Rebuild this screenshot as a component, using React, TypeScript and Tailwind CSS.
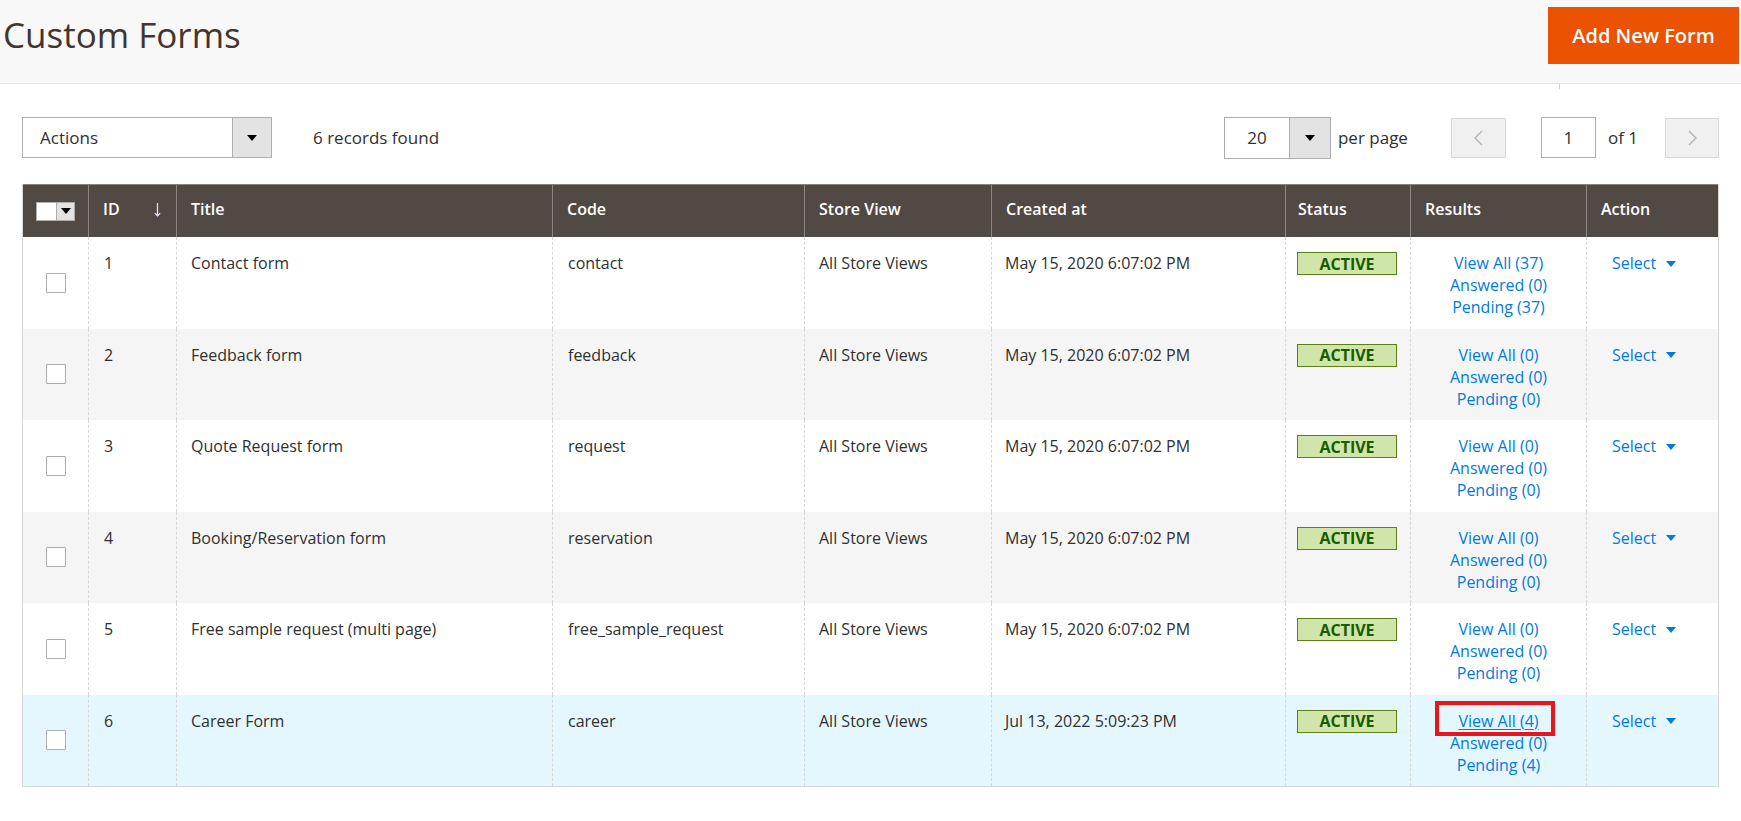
import React from "react";

type Row = {
  id: number;
  title: string;
  code: string;
  created: string;
  all: number;
  answered: number;
  pending: number;
};

const rows: Row[] = [
  { id: 1, title: "Contact form", code: "contact", created: "May 15, 2020 6:07:02 PM", all: 37, answered: 0, pending: 37 },
  { id: 2, title: "Feedback form", code: "feedback", created: "May 15, 2020 6:07:02 PM", all: 0, answered: 0, pending: 0 },
  { id: 3, title: "Quote Request form", code: "request", created: "May 15, 2020 6:07:02 PM", all: 0, answered: 0, pending: 0 },
  { id: 4, title: "Booking/Reservation form", code: "reservation", created: "May 15, 2020 6:07:02 PM", all: 0, answered: 0, pending: 0 },
  { id: 5, title: "Free sample request (multi page)", code: "free_sample_request", created: "May 15, 2020 6:07:02 PM", all: 0, answered: 0, pending: 0 },
  { id: 6, title: "Career Form", code: "career", created: "Jul 13, 2022 5:09:23 PM", all: 4, answered: 0, pending: 4 },
];

const rowBg = ["bg-white", "bg-[#f5f5f5]", "bg-white", "bg-[#f5f5f5]", "bg-white", "bg-[#e5f7fe]"];

const Caret = ({ className = "" }: { className?: string }) => (
  <svg width="10" height="6" viewBox="0 0 10 6" className={className}>
    <path d="M0 0 H10 L5 6 Z" fill="currentColor" />
  </svg>
);

const th = "h-[53px] px-[14px] pt-[13px] align-top text-left text-[16px] leading-[22px] font-semibold text-white border-l border-t border-[#8a837f]";
const td = "px-[14px] pt-[15px] align-top text-[16px] leading-[22px] border-l border-dashed border-[#d6d6d6]";

export default function App() {
  return (
    <div className="min-h-screen bg-white font-['Open_Sans',sans-serif] text-[#303030]">
      {/* page header */}
      <div className="relative flex h-[84px] items-start justify-between border-b border-[#e3e3e3] bg-[#f8f8f8] pl-[3px] pr-[2px]">
        <h1 className="mt-[11px] text-[35px] leading-[48px] font-normal text-[#41362f]">Custom Forms</h1>
        <button className="mt-[7px] h-[57px] w-[191px] bg-[#eb5202] text-[20px] font-semibold text-white">
          Add New Form
        </button>
        <span className="absolute left-[1559px] top-[84px] h-[5px] w-px bg-[#cfcfcf]" />
      </div>

      <div className="px-[22px]">
        {/* controls */}
        <div className="mt-[33px] flex h-[41px] items-center justify-between text-[17px]">
          <div className="flex items-center">
            <div className="flex h-[41px] w-[250px] shrink-0 border border-[#adadad]">
              <span className="flex flex-1 items-center pl-[17px]">Actions</span>
              <span className="flex w-[39px] items-center justify-center border-l border-[#adadad] bg-[#e3e3e3] text-black">
                <Caret />
              </span>
            </div>
            <span className="ml-[41px]">6 records found</span>
          </div>

          <div className="flex items-center">
            <div className="flex h-[42px] w-[107px] shrink-0 border border-[#adadad]">
              <span className="flex flex-1 items-center justify-center">20</span>
              <span className="flex w-[41px] items-center justify-center border-l border-[#adadad] bg-[#e3e3e3] text-black">
                <Caret />
              </span>
            </div>
            <span className="ml-[7px]">per page</span>
            <button className="ml-[43px] flex h-[40px] w-[55px] shrink-0 items-center justify-center border border-[#d9d9d9] bg-[#f0f0f0] text-[#b3b3b3]">
              <svg width="9" height="16" viewBox="0 0 9 16">
                <path d="M8 1 L1 8 L8 15" fill="none" stroke="currentColor" strokeWidth="1.4" />
              </svg>
            </button>
            <div className="ml-[35px] flex h-[41px] w-[55px] shrink-0 items-center justify-center border border-[#adadad]">
              1
            </div>
            <span className="ml-[12px]">of 1</span>
            <button className="ml-[27px] flex h-[40px] w-[54px] shrink-0 items-center justify-center border border-[#d9d9d9] bg-[#f0f0f0] text-[#b3b3b3]">
              <svg width="9" height="16" viewBox="0 0 9 16">
                <path d="M1 1 L8 8 L1 15" fill="none" stroke="currentColor" strokeWidth="1.4" />
              </svg>
            </button>
          </div>
        </div>

        {/* grid */}
        <div className="mt-[26px] border-x border-b border-[#d6d6d6]">
          <table className="w-full table-fixed border-separate border-spacing-0">
            <colgroup>
              <col className="w-[65px]" />
              <col className="w-[88px]" />
              <col className="w-[376px]" />
              <col className="w-[252px]" />
              <col className="w-[187px]" />
              <col className="w-[294px]" />
              <col className="w-[125px]" />
              <col className="w-[176px]" />
              <col className="w-[132px]" />
            </colgroup>
            <thead>
              <tr className="bg-[#514943]">
                <th className="h-[53px] border-t border-[#8a837f] align-middle">
                  <div className="mx-auto flex h-[19px] w-[39px] border border-[#adadad]">
                    <span className="w-[19px] bg-white" />
                    <span className="flex flex-1 items-center justify-center border-l border-[#adadad] bg-[#e3e3e3] text-black">
                      <Caret />
                    </span>
                  </div>
                </th>
                <th className={th}>
                  <div className="flex items-start justify-between">
                    <span>ID</span>
                    <svg width="7" height="14" viewBox="0 0 7 14" className="mt-[5px] mr-[1px] text-[#e8e8ff]">
                      <path d="M3.5 0 V13 M0.8 10.2 L3.5 13 L6.2 10.2" fill="none" stroke="currentColor" strokeWidth="1.2" />
                    </svg>
                  </div>
                </th>
                <th className={th}>Title</th>
                <th className={th}>Code</th>
                <th className={th}>Store View</th>
                <th className={th}>Created at</th>
                <th className={th + " pl-[12px]"}>Status</th>
                <th className={th}>Results</th>
                <th className={th}>Action</th>
              </tr>
            </thead>
            <tbody>
              {rows.map((r, i) => (
                <tr key={r.id} className={rowBg[i] + " h-[91.5px]"}>
                  <td className="align-middle">
                    <div className="mx-auto h-[20px] w-[20px] rounded-[1px] border border-[#adadad] bg-white" />
                  </td>
                  <td className={td + " pl-[15px]"}>{r.id}</td>
                  <td className={td}>{r.title}</td>
                  <td className={td + " pl-[15px]"}>{r.code}</td>
                  <td className={td}>All Store Views</td>
                  <td className={td + " pl-[13px]"}>{r.created}</td>
                  <td className={td + " pl-[11px] pt-[14px]"}>
                    <div className="flex h-[23px] w-[100px] items-center justify-center border border-[#5b8116] bg-[#d0e5a9] text-[16px] leading-none font-bold text-[#185b00]">
                      ACTIVE
                    </div>
                  </td>
                  <td className={td + " text-center"}>
                    <div className="text-[#007bdb]">
                      {i === 5 ? (
                        <span className="relative inline-block">
                          <a className="underline underline-offset-2">View All ({r.all})</a>
                          <span className="absolute -top-[9px] -bottom-[4px] -left-[23px] -right-[16px] border-4 border-[#e8141e]" />
                        </span>
                      ) : (
                        <a>View All ({r.all})</a>
                      )}
                    </div>
                    <div className="text-[#007bdb]">
                      <a>Answered ({r.answered})</a>
                    </div>
                    <div className="text-[#007bdb]">
                      <a>Pending ({r.pending})</a>
                    </div>
                  </td>
                  <td className={td + " pl-[25px]"}>
                    <span className="inline-flex items-center text-[#007bdb]">
                      Select
                      <Caret className="ml-[10px] mt-[1px]" />
                    </span>
                  </td>
                </tr>
              ))}
            </tbody>
          </table>
        </div>
      </div>
    </div>
  );
}
